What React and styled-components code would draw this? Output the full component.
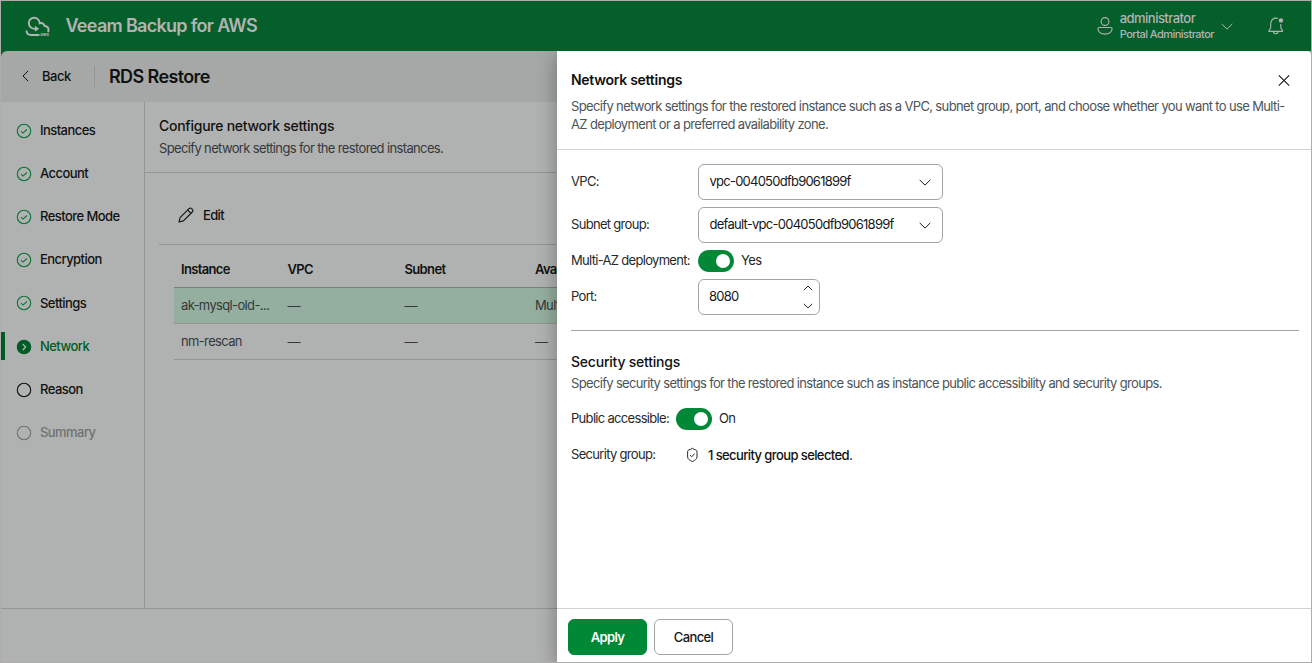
import React from "react";
import styled, { createGlobalStyle } from "styled-components";

const Global = createGlobalStyle`
  *, *::before, *::after { box-sizing: border-box; }
  html, body { margin: 0; padding: 0; }
  body {
    font-family: Inter, "Liberation Sans", sans-serif;
    font-size: 13px;
    line-height: 18px;
    letter-spacing: -0.65px;
    color: #101211;
    overflow: hidden;
  }
  button { font: inherit; letter-spacing: inherit; color: inherit; background: none; border: 0; padding: 0; }
  svg { display: block; flex: none; }
`;

const Frame = styled.div`
  position: relative;
  display: flex;
  flex-direction: column;
  width: 1312px;
  height: 663px;
  border: 1px solid #adadad;
  background: #b0b2b1;
  overflow: hidden;
`;

const TopBar = styled.header`
  flex: none;
  display: flex;
  align-items: center;
  height: 50px;
  padding: 0 26px 0 23px;
  background: #055f2b;
  color: #b3b3b3;
`;

const Brand = styled.div`
  flex: 1;
  margin-left: 14.5px;
  font-size: 18px;
  font-weight: 600;
  letter-spacing: -0.7px;
`;

const User = styled.div`
  margin: 0 7px 0 7px;
  line-height: 15px;
`;

const UserName = styled.div`
  height: 16px;
  font-size: 13px;
  font-weight: 500;
  letter-spacing: -0.52px;
`;

const UserRole = styled.div`
  font-size: 11px;
  font-weight: 500;
  letter-spacing: -0.53px;
`;

const BellSlot = styled.div`
  margin-left: 34px;
`;

const PageBarBacking = styled.div`
  flex: none;
  background: #055f2b;
`;

const PageBar = styled.div`
  display: flex;
  align-items: center;
  height: 51px;
  padding-left: 19px;
  background: #a5a8a6;
  border-top-left-radius: 6px;
`;

const Back = styled.button`
  display: flex;
  align-items: center;
  gap: 9px;
  width: 51px;
  padding-bottom: 1px;
  white-space: nowrap;
  font-weight: 500;
  letter-spacing: -0.5px;
`;

const BarDivider = styled.div`
  width: 1px;
  height: 21px;
  margin: 0 14px 0 23px;
  background: #929594;
`;

const PageTitle = styled.h1`
  margin: 0;
  font-size: 18px;
  font-weight: 600;
  letter-spacing: -0.62px;
`;

const Body = styled.div`
  flex: 1;
  display: flex;
  min-height: 0;
`;

const Steps = styled.nav`
  width: 144px;
  padding-top: 7px;
  border-right: 1px solid #929594;
`;

const stepColors = { active: "#005c26", disabled: "#6f7372" };

const Step = styled.div`
  display: flex;
  align-items: center;
  gap: 8px;
  height: 43.2px;
  padding-left: 15px;
  font-weight: 500;
  letter-spacing: -0.56px;
  color: ${(p) => stepColors[p.$state] || "#101211"};
  background: ${(p) =>
    p.$state === "active" ? "linear-gradient(#005c26, #005c26) 0 7px / 4px 28px no-repeat" : "none"};
`;

const StepName = styled.span`
  padding-bottom: 1.6px;
`;

const Content = styled.main`
  flex: 1;
  min-width: 0;
`;

const Intro = styled.div`
  height: 71px;
  padding: 15px 0 0 14px;
  border-bottom: 1px solid #929594;
`;

const IntroTitle = styled.h2`
  margin: 0 0 4px;
  font-size: 14px;
  font-weight: 500;
  letter-spacing: -0.26px;
`;

const IntroText = styled.p`
  margin: 0;
  color: #35393b;
  letter-spacing: -0.64px;
`;

const ToolRow = styled.div`
  display: flex;
  align-items: center;
  gap: 9px;
  height: 72px;
  margin-left: 14px;
  padding: 13px 0 0 19px;
  font-weight: 500;
  letter-spacing: -0.65px;
  border-bottom: 1px solid #929594;
`;

const Table = styled.div`
  margin-left: 29px;
`;

const Row = styled.div`
  display: grid;
  grid-template-columns: 106.5px 117px 130.5px 1fr;
  align-items: center;
  height: ${(p) => (p.$head ? 43 : 36)}px;
  padding: ${(p) => (p.$head ? "5px 0 0 7px" : "0 0 2px 7px")};
  border-bottom: 1px solid ${(p) => (p.$head ? "#7c8180" : "#929594")};
  background: ${(p) => (p.$selected ? "#94af9f" : "transparent")};
  color: ${(p) => (p.$head ? "#101211" : "#35393b")};
  font-weight: ${(p) => (p.$head ? 600 : 400)};
`;

const Dash = styled.span`
  padding-top: 2px;
`;

const PageFooter = styled.div`
  flex: none;
  height: 54px;
  border-top: 1px solid #929594;
`;

const Drawer = styled.section`
  position: absolute;
  top: 50px;
  right: 0;
  bottom: 0;
  width: 754px;
  display: flex;
  flex-direction: column;
  background: #fff;
  border-top-right-radius: 4px;
  box-shadow: -3px 4px 18px rgba(0, 0, 0, 0.25);
  clip-path: inset(0 0 0 -40px);
`;

const DrawerHead = styled.div`
  flex: none;
  height: 99px;
  padding: 20px 21px 0 14px;
  border-bottom: 1px solid #cfd3d2;
`;

const HeadLine = styled.div`
  display: flex;
  align-items: center;
  justify-content: space-between;
`;

const DrawerTitle = styled.h2`
  margin: 0;
  font-size: 14px;
  font-weight: 600;
  letter-spacing: -0.28px;
`;

const CloseButton = styled.button`
  padding-top: 0;
`;

const Lead = styled.p`
  margin: ${(p) => p.$top || 0}px 0 0;
  color: #4c5458;
  letter-spacing: ${(p) => p.$ls || -0.664}px;
  white-space: nowrap;
`;

const DrawerBody = styled.div`
  flex: 1;
  padding: 14px 12px 0 14px;
`;

const Field = styled.div`
  display: flex;
  align-items: center;
  height: ${(p) => p.$h || 36}px;
  margin-bottom: ${(p) => p.$gap || 0}px;
  color: #26292b;
`;

const Label = styled.label`
  width: ${(p) => p.$w || 127}px;
  padding-bottom: 2px;
  letter-spacing: -0.69px;
  white-space: nowrap;
`;

const FieldText = styled.span`
  padding-bottom: 2px;
  letter-spacing: ${(p) => p.$ls || -0.6}px;
`;

const Select = styled.div`
  display: flex;
  align-items: center;
  justify-content: space-between;
  width: ${(p) => p.$w}px;
  height: 36px;
  padding: 0 ${(p) => p.$pr || 11}px 0 ${(p) => p.$pl || 10.5}px;
  border: 1px solid #9ea5a8;
  border-radius: 6px;
  color: #161819;
`;

const Spinner = styled.div`
  display: flex;
  flex-direction: column;
  gap: 12px;
`;

const Toggle = styled.div`
  width: 36px;
  height: 22px;
  margin-right: 7px;
  padding: 4px 3px 0 18px;
  border-radius: 11px;
  background: #008836;

  &::after {
    content: "";
    display: block;
    width: 14px;
    height: 14px;
    border-radius: 50%;
    background: #fff;
  }
`;

const Rule = styled.div`
  height: 1px;
  margin-top: 15px;
  background: #a1a6a9;
`;

const SectionTitle = styled.h3`
  margin: 22px 0 0;
  font-size: 14px;
  font-weight: 500;
  letter-spacing: -0.22px;
`;

const GroupValue = styled.span`
  margin-left: 10px;
  padding-bottom: 1px;
  font-weight: 500;
  color: #101211;
  letter-spacing: -0.6px;
`;

const DrawerFoot = styled.div`
  flex: none;
  display: flex;
  gap: 7px;
  height: 54px;
  padding: 10px 0 0 11px;
  border-top: 1px solid #cfd3d2;
`;

const Button = styled.button`
  width: 79px;
  height: 36px;
  padding-bottom: 1px;
  border-radius: 6px;
  font-weight: ${(p) => (p.$primary ? 600 : 500)};
  letter-spacing: -0.62px;
  color: ${(p) => (p.$primary ? "#fff" : "#161819")};
  background: ${(p) => (p.$primary ? "#008836" : "#fff")};
  border: 1px solid ${(p) => (p.$primary ? "#008836" : "#9ea5a8")};
`;

const Chevron = ({ w = 12, h = 7, d = "M.7 .9 6 6.1 11.3 .9", sw = 1 }) => (
  <svg width={w} height={h} viewBox={`0 0 ${w} ${h}`} fill="none" stroke="currentColor" strokeWidth={sw}>
    <path d={d} />
  </svg>
);

const Logo = () => (
  <svg width="27" height="22" viewBox="0 0 27 22" fill="none" stroke="#b3b3b3" strokeWidth="1.9">
    <path d="M12 13.800C7.500 14.200 4.800 11.500 4.800 8 4.800 4.900 7.200 2.800 10.100 2.800c3.200 0 5.600 2.300 5.500 5.400 2.400-.5 4.400.7 5 2.800 2.700.3 4 2.100 3.900 4.200 0 .7-.2 1.300-.5 1.900" />
    <path d="M2.500 15.500c.1 3 1.800 4.500 4.500 4.500h8.500" />
    <path d="m10.900 10.700 4.300 3.100-4.300 3z" fill="#b3b3b3" stroke="none" />
    <text x="16.300" y="21" fill="#b3b3b3" stroke="none" fontSize="4.500" fontWeight="700" letterSpacing="-.1">
      aws
    </text>
  </svg>
);

const StepIcon = ({ state }) => {
  const color = { done: "#0c7338", active: "#005c26", todo: "#101211", disabled: "#6f7372" }[state];
  return (
    <svg width="16" height="16" viewBox="0 0 16 16" fill="none" stroke={color} strokeWidth="1.1">
      <circle cx="8" cy="8" r="6.700" fill={state === "active" ? color : "none"} />
      {state === "done" && <path d="m5 8.200 2 1.900 3.900-3.600" />}
      {state === "active" && <path d="m6.800 5.200 2.900 2.900L6.800 11" stroke="#c0c7c2" />}
    </svg>
  );
};

const steps = [
  ["Instances", "done"],
  ["Account", "done"],
  ["Restore Mode", "done"],
  ["Encryption", "done"],
  ["Settings", "done"],
  ["Network", "active"],
  ["Reason", "todo"],
  ["Summary", "disabled"],
];

export default function App() {
  return (
    <>
      <Global />
      <Frame>
        <TopBar>
          <Logo />
          <Brand>Veeam Backup for AWS</Brand>
          <svg width="16" height="18" viewBox="0 0 16 18" fill="none" stroke="#b3b3b3" strokeWidth="1.1">
            <circle cx="8" cy="4.500" r="3.900" />
            <path d="M2.200 10.500h11.600c.8 0 1.400.5 1.300 1.300-.3 3.300-3 5.300-7.100 5.300s-6.800-2-7.100-5.300c0-.8.500-1.300 1.300-1.300z" />
          </svg>
          <User>
            <UserName>administrator</UserName>
            <UserRole>Portal Administrator</UserRole>
          </User>
          <Chevron />
          <BellSlot>
            <svg width="18" height="18" viewBox="0 0 18 18" fill="none" stroke="#b3b3b3" strokeWidth="1.1">
              <path d="M10.800 1.400C6.600.4 3.700 2.900 3.700 6.700v4.200l-1.800 2.800c-.2.400 0 .7.400.7h12.900c.4 0 .6-.3.400-.7l-1.800-2.800V7" />
              <path d="M6.400 14.500c0 3 4.700 3 4.700 0" />
              <circle cx="13.900" cy="3.400" r="2.200" fill="#b3b3b3" stroke="none" />
            </svg>
          </BellSlot>
        </TopBar>
        <PageBarBacking>
          <PageBar>
            <Back>
              <Chevron w={13} h={12} d="M8.200 .8 3 6l5.200 5.200" />
              Back
            </Back>
            <BarDivider />
            <PageTitle>RDS Restore</PageTitle>
          </PageBar>
        </PageBarBacking>
        <Body>
          <Steps>
            {steps.map(([name, state]) => (
              <Step key={name} $state={state}>
                <StepIcon state={state} />
                <StepName>{name}</StepName>
              </Step>
            ))}
          </Steps>
          <Content>
            <Intro>
              <IntroTitle>Configure network settings</IntroTitle>
              <IntroText>Specify network settings for the restored instances.</IntroText>
            </Intro>
            <ToolRow>
              <svg
                width="16"
                height="16"
                viewBox="0 0 16 16"
                fill="none"
                stroke="#101211"
                strokeWidth="1.1"
                strokeLinejoin="round"
              >
                <path d="m1 15 1.100-4.400L11 1.700c.8-.8 1.900-.8 2.700 0l.6.6c.8.800.8 1.900 0 2.700l-8.900 8.900z" />
                <path d="m9.700 3 3.300 3.300" />
              </svg>
              Edit
            </ToolRow>
            <Table>
              <Row $head>
                <span>Instance</span>
                <span>VPC</span>
                <span>Subnet</span>
                <span>Avai</span>
              </Row>
              <Row $selected>
                <span>ak-mysql-old-...</span>
                <Dash>—</Dash>
                <Dash>—</Dash>
                <span>Mult</span>
              </Row>
              <Row>
                <span>nm-rescan</span>
                <Dash>—</Dash>
                <Dash>—</Dash>
                <Dash>—</Dash>
              </Row>
            </Table>
          </Content>
        </Body>
        <PageFooter />
        <Drawer>
          <DrawerHead>
            <HeadLine>
              <DrawerTitle>Network settings</DrawerTitle>
              <CloseButton>
                <svg width="12" height="13" viewBox="0 0 12 13" fill="none" stroke="#161819" strokeWidth="1.1">
                  <path d="m.8 1.300 10.400 10.400M11.200 1.300 .8 11.700" />
                </svg>
              </CloseButton>
            </HeadLine>
            <Lead $top={8} $ls={-0.642}>
              Specify network settings for the restored instance such as a VPC, subnet group, port, and choose whether you want to use Multi-
              <br />
              AZ deployment or a preferred availability zone.
            </Lead>
          </DrawerHead>
          <DrawerBody>
            <Field $gap={7}>
              <Label>VPC:</Label>
              <Select $w={245}>
                <FieldText $ls={-0.76}>vpc-004050dfb9061899f</FieldText>
                <Chevron />
              </Select>
            </Field>
            <Field $gap={7}>
              <Label>Subnet group:</Label>
              <Select $w={245}>
                <FieldText $ls={-0.74}>default-vpc-004050dfb9061899f</FieldText>
                <Chevron />
              </Select>
            </Field>
            <Field $h={22} $gap={7}>
              <Label>Multi-AZ deployment:</Label>
              <Toggle />
              <FieldText>Yes</FieldText>
            </Field>
            <Field>
              <Label>Port:</Label>
              <Select $w={122} $pl={10} $pr={6}>
                <FieldText $ls={-0.8}>8080</FieldText>
                <Spinner>
                  <Chevron w={10} h={6} sw={0.9} d="M.8 5.200 5 1l4.200 4.200" />
                  <Chevron w={10} h={6} sw={0.9} d="M.8 .8 5 5 9.200 .8" />
                </Spinner>
              </Select>
            </Field>
            <Rule />
            <SectionTitle>Security settings</SectionTitle>
            <Lead $top={3}>
              Specify security settings for the restored instance such as instance public accessibility and security groups.
            </Lead>
            <Field $h={53}>
              <Label $w={105}>Public accessible:</Label>
              <Toggle />
              <FieldText>On</FieldText>
            </Field>
            <Field $h={20}>
              <Label $w={115}>Security group:</Label>
              <svg width="12" height="16" viewBox="0 0 12 16" fill="none" stroke="#26292b" strokeWidth="1">
                <path
                  d="M6.300 1.200C7.300 2.200 8.600 2.600 9.700 2.900c.9.300 1.300.9 1.300 1.800v5.200c0 2-1.900 3.300-4.700 4.700-2.800-1.400-4.700-2.700-4.700-4.700V4.700c0-.9.400-1.500 1.300-1.800 1.100-.3 2.400-.7 3.400-1.700z"
                  strokeLinejoin="round"
                />
                <path d="m4.100 8.200 1.600 1.500 2.900-2.900" />
              </svg>
              <GroupValue>1 security group selected.</GroupValue>
            </Field>
          </DrawerBody>
          <DrawerFoot>
            <Button $primary>Apply</Button>
            <Button>Cancel</Button>
          </DrawerFoot>
        </Drawer>
      </Frame>
    </>
  );
}
